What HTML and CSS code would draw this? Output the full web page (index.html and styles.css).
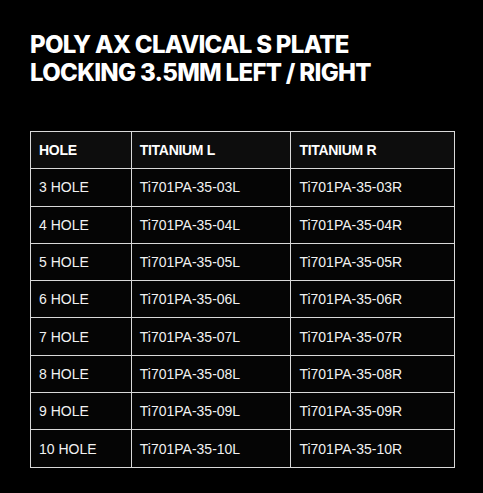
FILE: index.html
```html
<!DOCTYPE html>
<html>
<head>
<meta charset="utf-8">
<link rel="stylesheet" href="styles.css">
</head>
<body>
<main class="page">
  <h1 class="title">POLY AX CLAVICAL S PLATE<br>LOCKING 3.5MM LEFT / RIGHT</h1>
  <table class="spec">
    <thead>
      <tr><th class="c1">HOLE</th><th class="c2">TITANIUM L</th><th class="c3">TITANIUM R</th></tr>
    </thead>
    <tbody>
      <tr><td>3 HOLE</td><td>Ti701PA-35-03L</td><td>Ti701PA-35-03R</td></tr>
      <tr><td>4 HOLE</td><td>Ti701PA-35-04L</td><td>Ti701PA-35-04R</td></tr>
      <tr><td>5 HOLE</td><td>Ti701PA-35-05L</td><td>Ti701PA-35-05R</td></tr>
      <tr><td>6 HOLE</td><td>Ti701PA-35-06L</td><td>Ti701PA-35-06R</td></tr>
      <tr><td>7 HOLE</td><td>Ti701PA-35-07L</td><td>Ti701PA-35-07R</td></tr>
      <tr><td>8 HOLE</td><td>Ti701PA-35-08L</td><td>Ti701PA-35-08R</td></tr>
      <tr><td>9 HOLE</td><td>Ti701PA-35-09L</td><td>Ti701PA-35-09R</td></tr>
      <tr><td>10 HOLE</td><td>Ti701PA-35-10L</td><td>Ti701PA-35-10R</td></tr>
    </tbody>
  </table>
</main>
</body>
</html>
```
FILE: styles.css
```css
html, body {
  margin: 0;
  padding: 0;
  background: #000;
}
.page {
  padding: 31px 29px 0 30px;
}
.title {
  margin: 0 0 44px 0;
  font-family: Inter, "Noto Sans", sans-serif;
  font-weight: 800;
  font-size: 24px;
  line-height: 28px;
  letter-spacing: -0.7px;
  color: #fff;
}
.spec {
  border-collapse: collapse;
  width: 425px;
  font-family: "Liberation Sans", Arial, sans-serif;
  font-size: 14px;
  color: #f2f2f2;
}
.spec th, .spec td {
  border: 1px solid #d9d9d9;
  height: 37.3px;
  padding: 0 8px;
  text-align: left;
  vertical-align: middle;
  box-sizing: border-box;
}
.spec th {
  background: #0d0d0d;
  font-weight: 700;
  color: #fff;
  letter-spacing: -0.3px;
}
.spec td {
  background: #050505;
}
.c1 { width: 101px; }
.c2 { width: 160px; }
.c3 { width: 164px; }
```
